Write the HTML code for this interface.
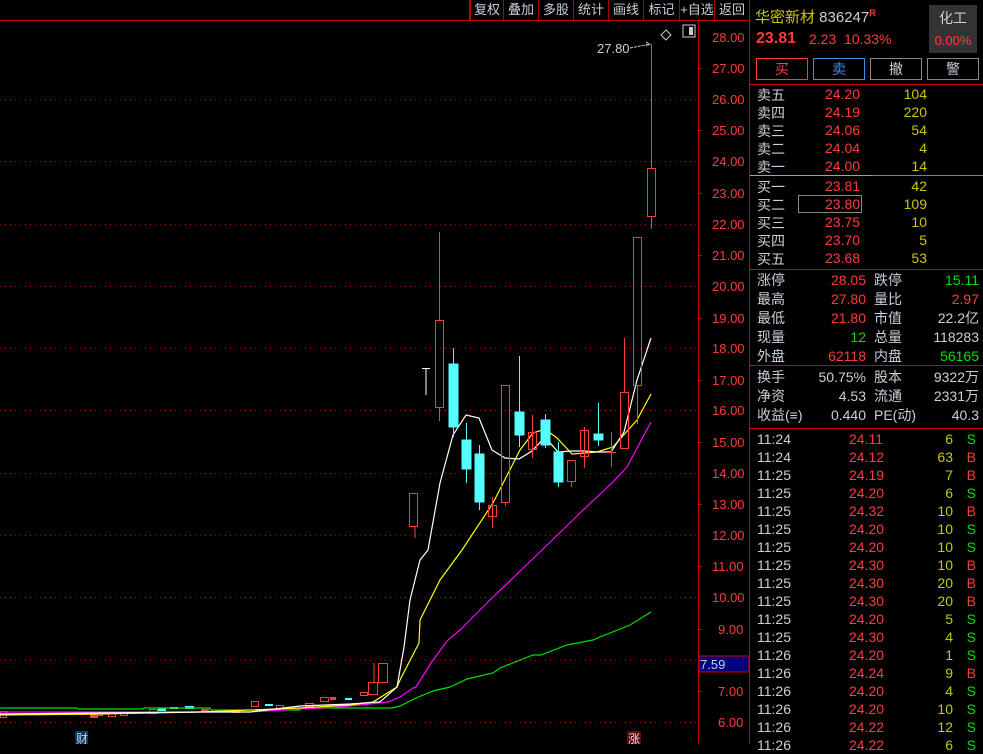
<!DOCTYPE html>
<html><head><meta charset="utf-8"><style>
*{margin:0;padding:0;box-sizing:border-box}
body{width:983px;height:744px;background:#000;overflow:hidden;position:relative;font-family:"Liberation Sans","Noto Sans CJK SC",sans-serif;color:#c8d0d8}
.a{position:absolute;white-space:nowrap}
.tb{position:absolute;top:0;height:20px;font-size:13px;line-height:20px;text-align:center;border-left:1px solid #a00;color:#c8d0d8}
.r{color:#ff3b3b}.y{color:#c8c800}.g{color:#00e000}
.row{position:absolute;left:757px;font-size:14px;height:18px;line-height:18px}
</style></head><body>
<div class="tb" style="left:469px;width:34px;border-left:2px solid #c00">复权</div>
<div class="tb" style="left:503px;width:35px">叠加</div>
<div class="tb" style="left:538px;width:35px">多股</div>
<div class="tb" style="left:573px;width:35px">统计</div>
<div class="tb" style="left:608px;width:35px">画线</div>
<div class="tb" style="left:643px;width:36px">标记</div>
<div class="tb" style="left:679px;width:35px">+自选</div>
<div class="tb" style="left:714px;width:35px">返回</div>
<div class="a" style="left:0;top:20px;width:749px;height:1px;background:#c00"></div>
<div class="a" style="left:749px;top:0;width:1px;height:744px;background:#c00"></div>
<svg class="a" style="left:0;top:0" width="749" height="744">
<g stroke="#a00" stroke-dasharray="1 4" stroke-width="1">
<line x1="0" y1="99.5" x2="698" y2="99.5"/><line x1="0" y1="161.5" x2="698" y2="161.5"/><line x1="0" y1="224.5" x2="698" y2="224.5"/><line x1="0" y1="286.5" x2="698" y2="286.5"/><line x1="0" y1="348.5" x2="698" y2="348.5"/><line x1="0" y1="410.5" x2="698" y2="410.5"/><line x1="0" y1="473.5" x2="698" y2="473.5"/><line x1="0" y1="535.5" x2="698" y2="535.5"/><line x1="0" y1="597.5" x2="698" y2="597.5"/><line x1="0" y1="660.5" x2="698" y2="660.5"/><line x1="0" y1="722.5" x2="698" y2="722.5"/>
</g>
<line x1="698.5" y1="21" x2="698.5" y2="744" stroke="#c00"/>
<g stroke="#c00"><line x1="698" y1="68.5" x2="702" y2="68.5"/><line x1="698" y1="130.5" x2="702" y2="130.5"/><line x1="698" y1="193.5" x2="702" y2="193.5"/><line x1="698" y1="255.5" x2="702" y2="255.5"/><line x1="698" y1="318.5" x2="702" y2="318.5"/><line x1="698" y1="380.5" x2="702" y2="380.5"/><line x1="698" y1="442.5" x2="702" y2="442.5"/><line x1="698" y1="504.5" x2="702" y2="504.5"/><line x1="698" y1="566.5" x2="702" y2="566.5"/><line x1="698" y1="629.5" x2="702" y2="629.5"/><line x1="698" y1="691.5" x2="702" y2="691.5"/></g>
<g font-size="13" fill="#ff3b3b" font-family="Liberation Sans">
<text x="712" y="42">28.00</text><text x="712" y="73">27.00</text><text x="712" y="104">26.00</text><text x="712" y="135">25.00</text><text x="712" y="166">24.00</text><text x="712" y="198">23.00</text><text x="712" y="229">22.00</text><text x="712" y="260">21.00</text><text x="712" y="291">20.00</text><text x="712" y="323">19.00</text><text x="712" y="353">18.00</text><text x="712" y="385">17.00</text><text x="712" y="415">16.00</text><text x="712" y="447">15.00</text><text x="712" y="478">14.00</text><text x="712" y="509">13.00</text><text x="712" y="540">12.00</text><text x="712" y="571">11.00</text><text x="712" y="602">10.00</text><text x="718" y="634">9.00</text><text x="718" y="696">7.00</text><text x="718" y="727">6.00</text>
</g>
<rect x="699" y="656" width="50" height="16" fill="#000080" stroke="#c00"/>
<text x="700" y="669" font-size="13" fill="#c8d0d8">7.59</text>
<path d="M666 30l5 5-5 5-5-5z" fill="none" stroke="#ccc"/>
<rect x="683" y="25" width="12" height="12" fill="none" stroke="#ccc"/><rect x="689" y="27" width="4" height="8" fill="#ccc"/>
<text x="597" y="53" font-size="13" fill="#c8d0d8">27.80</text>
<path d="M630 48 L650 44 M646 42 L650 44 L646 46" stroke="#ccc" fill="none" stroke-dasharray="3 1"/>
<!-- small candles -->
<g stroke="#ff3b3b" fill="none">
<rect x="0.5" y="711.5" width="6" height="6"/><rect x="95.5" y="712.5" width="7" height="3"/><rect x="108.5" y="713.5" width="7" height="3"/><rect x="120.5" y="712.5" width="7" height="3"/><rect x="149.5" y="709.5" width="8" height="4"/><rect x="276.5" y="705.5" width="7" height="3"/><rect x="305.5" y="703.5" width="8" height="3"/><rect x="320.5" y="697.5" width="8" height="4"/><rect x="251.5" y="701.5" width="7" height="5"/><rect x="360.5" y="692.5" width="7" height="3"/><rect x="368.5" y="682.5" width="9" height="12"/><rect x="378.5" y="663.5" width="9" height="19"/>
<line x1="374" y1="663" x2="374" y2="682"/><line x1="415" y1="527" x2="415" y2="538"/>
</g>
<g fill="#ff3b3b"><rect x="79" y="712" width="8" height="3"/><rect x="90" y="713" width="8" height="5"/><rect x="232" y="710" width="8" height="3"/><rect x="330" y="697" width="6" height="3"/><rect x="201" y="709" width="8" height="3"/></g>
<g fill="#55ffff"><rect x="158" y="708" width="8" height="3"/><rect x="185" y="706" width="9" height="3"/><rect x="265" y="704" width="8" height="2"/><rect x="345" y="698" width="7" height="2"/><rect x="170" y="707" width="8" height="2"/></g>
<!-- MA lines -->
<polyline fill="none" stroke="#00e000" stroke-width="1.2" points="0,708 77,708 78,709 143,709 144,708 210,708 211,710 300,710 301,708 392,708 400,706 416,698 433,691 450,687 467,679 493,673 500,668 533,655 541,655 567,645 593,640 600,637 630,625 651,612"/>
<polyline fill="none" stroke="#ff00ff" stroke-width="1.2" points="0,712 250,712 300,709 340,707 370,704 388,702 400,697 413,688 416,687 431,663 447,641 460,630 490,600 542,550 580,513 613,482 627,467 651,422"/>
<polyline fill="none" stroke="#ffff00" stroke-width="1.2" points="0,715 100,714 200,712 300,708 350,705 373,702 397,687 400,680 419,643 420,620 440,580 462,550 493,503 520,450 533,433 545,429 557,438 572,454 597,452 613,447 637,420 651,394"/>
<polyline fill="none" stroke="#ffffff" stroke-width="1.2" points="0,714 100,713 200,712 250,712 300,706 350,704 380,702 397,687 404,647 410,600 420,560 428,550 440,483 453,435 466,415 479,418 492,450 505,458 519,459 532,451 545,437 558,452 571,451 584,451 598,452 611,452 624,432 637,380 651,338"/>
<!-- candles -->
<g stroke="#ff3b3b" fill="none">
<rect x="409.5" y="493.5" width="8" height="33"/>
<line x1="439.5" y1="232" x2="439.5" y2="320"/><line x1="439.5" y1="407" x2="439.5" y2="421"/><rect x="435.5" y="320.5" width="8" height="87"/>
<line x1="492.5" y1="497" x2="492.5" y2="528"/><rect x="488.5" y="505.5" width="8" height="11"/>
<line x1="505.5" y1="502" x2="505.5" y2="506"/><rect x="501.5" y="385.5" width="8" height="117"/>
<line x1="532.5" y1="415" x2="532.5" y2="458"/><rect x="528.5" y="432.5" width="8" height="17"/>
<line x1="571.5" y1="481" x2="571.5" y2="487"/><rect x="567.5" y="460.5" width="8" height="21"/>
<line x1="584.5" y1="427" x2="584.5" y2="468"/><rect x="580.5" y="430.5" width="8" height="26"/>
<line x1="611.5" y1="432" x2="611.5" y2="467"/><line x1="606" y1="452.5" x2="616" y2="452.5"/>
<line x1="624.5" y1="338" x2="624.5" y2="392"/><rect x="620.5" y="392.5" width="8" height="56"/>
<line x1="637.5" y1="385" x2="637.5" y2="424"/><rect x="633.5" y="237.5" width="8" height="148"/>
<line x1="651.5" y1="44" x2="651.5" y2="168"/><line x1="651.5" y1="216" x2="651.5" y2="229"/><rect x="647.5" y="168.5" width="8" height="48"/>
</g>
<g stroke="#55ffff" fill="#55ffff">
<line x1="453.5" y1="348" x2="453.5" y2="437"/><rect x="449" y="364" width="9" height="63"/>
<line x1="466.5" y1="423" x2="466.5" y2="483"/><rect x="462" y="440" width="9" height="29"/>
<line x1="479.5" y1="445" x2="479.5" y2="510"/><rect x="475" y="454" width="9" height="48"/>
<line x1="519.5" y1="356" x2="519.5" y2="447"/><rect x="515" y="412" width="9" height="23"/>
<line x1="545.5" y1="414" x2="545.5" y2="448"/><rect x="541" y="420" width="9" height="25"/>
<line x1="558.5" y1="442" x2="558.5" y2="487"/><rect x="554" y="452" width="9" height="30"/>
<line x1="598.5" y1="403" x2="598.5" y2="446"/><rect x="594" y="434" width="9" height="6"/>
</g>
<path d="M422 368.5h8M426 368v27" stroke="#fff"/>
<rect x="75" y="731" width="13" height="13" fill="#0a3a6a"/><text x="76" y="743" font-size="12" fill="#c8d0d8">财</text>
<rect x="627" y="731" width="14" height="13" fill="#5a0a0a"/><text x="628" y="743" font-size="12" fill="#ddd">涨</text>
</svg>
<!-- right panel -->
<div class="a y" style="left:755px;top:6px;font-size:15px">华密新材 <span style="color:#c8d0d8">836247</span><sup class="r" style="font-size:9px;font-weight:bold">R</sup></div>
<div class="a r" style="left:756px;top:30px;font-size:16px;font-weight:bold">23.81</div>
<div class="a r" style="left:809px;top:31px;font-size:14px">2.23&nbsp;&nbsp;10.33%</div>
<div class="a" style="left:929px;top:5px;width:48px;height:48px;background:#333"></div>
<div class="a" style="left:929px;top:8px;width:48px;text-align:center;font-size:14px">化工</div>
<div class="a r" style="left:929px;top:33px;width:48px;text-align:center;font-size:13px">0.00%</div>
<div class="a r" style="left:756px;top:58px;width:52px;height:22px;border:1px solid #ff3b3b;text-align:center;line-height:20px;font-size:14px">买</div>
<div class="a" style="left:813px;top:58px;width:52px;height:22px;border:1px solid #3a8ee6;text-align:center;line-height:20px;font-size:14px;color:#3a8ee6">卖</div>
<div class="a" style="left:870px;top:58px;width:52px;height:22px;border:1px solid #888;text-align:center;line-height:20px;font-size:14px">撤</div>
<div class="a" style="left:927px;top:58px;width:52px;height:22px;border:1px solid #888;text-align:center;line-height:20px;font-size:14px">警</div>
<div class="a" style="left:750px;top:84px;width:233px;height:1px;background:#c00"></div>
<div class="a" style="left:750px;top:175px;width:122px;height:1px;background:#e0a000"></div>
<div class="a" style="left:872px;top:175px;width:111px;height:1px;background:#3a8ee6"></div>
<div class="a" style="left:750px;top:269px;width:233px;height:1px;background:#c00"></div>
<div class="a" style="left:750px;top:365px;width:233px;height:1px;background:#c00"></div>
<div class="a" style="left:750px;top:428px;width:233px;height:1px;background:#c00"></div>
<div class="a" style="left:798px;top:195px;width:64px;height:18px;border:1px solid #888"></div>

<div class="row" style="top:86px">卖五</div><div class="a r" style="left:825px;top:86px;font-size:14px">24.20</div><div class="a y" style="left:880px;top:86px;width:47px;text-align:right;font-size:14px">104</div>
<div class="row" style="top:104px">卖四</div><div class="a r" style="left:825px;top:104px;font-size:14px">24.19</div><div class="a y" style="left:880px;top:104px;width:47px;text-align:right;font-size:14px">220</div>
<div class="row" style="top:122px">卖三</div><div class="a r" style="left:825px;top:122px;font-size:14px">24.06</div><div class="a y" style="left:880px;top:122px;width:47px;text-align:right;font-size:14px">54</div>
<div class="row" style="top:140px">卖二</div><div class="a r" style="left:825px;top:140px;font-size:14px">24.04</div><div class="a y" style="left:880px;top:140px;width:47px;text-align:right;font-size:14px">4</div>
<div class="row" style="top:158px">卖一</div><div class="a r" style="left:825px;top:158px;font-size:14px">24.00</div><div class="a y" style="left:880px;top:158px;width:47px;text-align:right;font-size:14px">14</div>
<div class="row" style="top:178px">买一</div><div class="a r" style="left:825px;top:178px;font-size:14px">23.81</div><div class="a y" style="left:880px;top:178px;width:47px;text-align:right;font-size:14px">42</div>
<div class="row" style="top:196px">买二</div><div class="a r" style="left:825px;top:196px;font-size:14px">23.80</div><div class="a y" style="left:880px;top:196px;width:47px;text-align:right;font-size:14px">109</div>
<div class="row" style="top:214px">买三</div><div class="a r" style="left:825px;top:214px;font-size:14px">23.75</div><div class="a y" style="left:880px;top:214px;width:47px;text-align:right;font-size:14px">10</div>
<div class="row" style="top:232px">买四</div><div class="a r" style="left:825px;top:232px;font-size:14px">23.70</div><div class="a y" style="left:880px;top:232px;width:47px;text-align:right;font-size:14px">5</div>
<div class="row" style="top:250px">买五</div><div class="a r" style="left:825px;top:250px;font-size:14px">23.68</div><div class="a y" style="left:880px;top:250px;width:47px;text-align:right;font-size:14px">53</div>

<div style="position:absolute;left:757px;top:271px;width:222px;font-size:14px;line-height:19px">
<div style="position:relative;height:19px"><span>涨停</span><span class="a r" style="right:113px">28.05</span><span class="a" style="left:117px">跌停</span><span class="a g" style="right:0">15.11</span></div>
<div style="position:relative;height:19px"><span>最高</span><span class="a r" style="right:113px">27.80</span><span class="a" style="left:117px">量比</span><span class="a r" style="right:0">2.97</span></div>
<div style="position:relative;height:19px"><span>最低</span><span class="a r" style="right:113px">21.80</span><span class="a" style="left:117px">市值</span><span class="a" style="right:0">22.2亿</span></div>
<div style="position:relative;height:19px"><span>现量</span><span class="a g" style="right:113px">12</span><span class="a" style="left:117px">总量</span><span class="a" style="right:0">118283</span></div>
<div style="position:relative;height:19px"><span>外盘</span><span class="a r" style="right:113px">62118</span><span class="a" style="left:117px">内盘</span><span class="a g" style="right:0">56165</span></div>
</div>
<div style="position:absolute;left:757px;top:368px;width:222px;font-size:14px;line-height:19px">
<div style="position:relative;height:19px"><span>换手</span><span class="a" style="right:113px">50.75%</span><span class="a" style="left:117px">股本</span><span class="a" style="right:0">9322万</span></div>
<div style="position:relative;height:19px"><span>净资</span><span class="a" style="right:113px">4.53</span><span class="a" style="left:117px">流通</span><span class="a" style="right:0">2331万</span></div>
<div style="position:relative;height:19px"><span>收益(≡)</span><span class="a" style="right:113px">0.440</span><span class="a" style="left:117px">PE(动)</span><span class="a" style="right:0">40.3</span></div>
</div>
<div style="position:absolute;left:757px;top:430px;width:222px;font-size:14px;line-height:18px">
<div style="position:relative;height:18px">11:24<span class="a r" style="left:92px">24.11</span><span class="a y" style="right:26px">6</span><span class="a g" style="right:3px">S</span></div>
<div style="position:relative;height:18px">11:24<span class="a r" style="left:92px">24.12</span><span class="a y" style="right:26px">63</span><span class="a r" style="right:3px">B</span></div>
<div style="position:relative;height:18px">11:25<span class="a r" style="left:92px">24.19</span><span class="a y" style="right:26px">7</span><span class="a r" style="right:3px">B</span></div>
<div style="position:relative;height:18px">11:25<span class="a r" style="left:92px">24.20</span><span class="a y" style="right:26px">6</span><span class="a g" style="right:3px">S</span></div>
<div style="position:relative;height:18px">11:25<span class="a r" style="left:92px">24.32</span><span class="a y" style="right:26px">10</span><span class="a r" style="right:3px">B</span></div>
<div style="position:relative;height:18px">11:25<span class="a r" style="left:92px">24.20</span><span class="a y" style="right:26px">10</span><span class="a g" style="right:3px">S</span></div>
<div style="position:relative;height:18px">11:25<span class="a r" style="left:92px">24.20</span><span class="a y" style="right:26px">10</span><span class="a g" style="right:3px">S</span></div>
<div style="position:relative;height:18px">11:25<span class="a r" style="left:92px">24.30</span><span class="a y" style="right:26px">10</span><span class="a r" style="right:3px">B</span></div>
<div style="position:relative;height:18px">11:25<span class="a r" style="left:92px">24.30</span><span class="a y" style="right:26px">20</span><span class="a r" style="right:3px">B</span></div>
<div style="position:relative;height:18px">11:25<span class="a r" style="left:92px">24.30</span><span class="a y" style="right:26px">20</span><span class="a r" style="right:3px">B</span></div>
<div style="position:relative;height:18px">11:25<span class="a r" style="left:92px">24.20</span><span class="a y" style="right:26px">5</span><span class="a g" style="right:3px">S</span></div>
<div style="position:relative;height:18px">11:25<span class="a r" style="left:92px">24.30</span><span class="a y" style="right:26px">4</span><span class="a g" style="right:3px">S</span></div>
<div style="position:relative;height:18px">11:26<span class="a r" style="left:92px">24.20</span><span class="a y" style="right:26px">1</span><span class="a g" style="right:3px">S</span></div>
<div style="position:relative;height:18px">11:26<span class="a r" style="left:92px">24.24</span><span class="a y" style="right:26px">9</span><span class="a r" style="right:3px">B</span></div>
<div style="position:relative;height:18px">11:26<span class="a r" style="left:92px">24.20</span><span class="a y" style="right:26px">4</span><span class="a g" style="right:3px">S</span></div>
<div style="position:relative;height:18px">11:26<span class="a r" style="left:92px">24.20</span><span class="a y" style="right:26px">10</span><span class="a g" style="right:3px">S</span></div>
<div style="position:relative;height:18px">11:26<span class="a r" style="left:92px">24.22</span><span class="a y" style="right:26px">12</span><span class="a g" style="right:3px">S</span></div>
<div style="position:relative;height:18px">11:26<span class="a r" style="left:92px">24.22</span><span class="a y" style="right:26px">6</span><span class="a g" style="right:3px">S</span></div>
</div>
</body></html>
